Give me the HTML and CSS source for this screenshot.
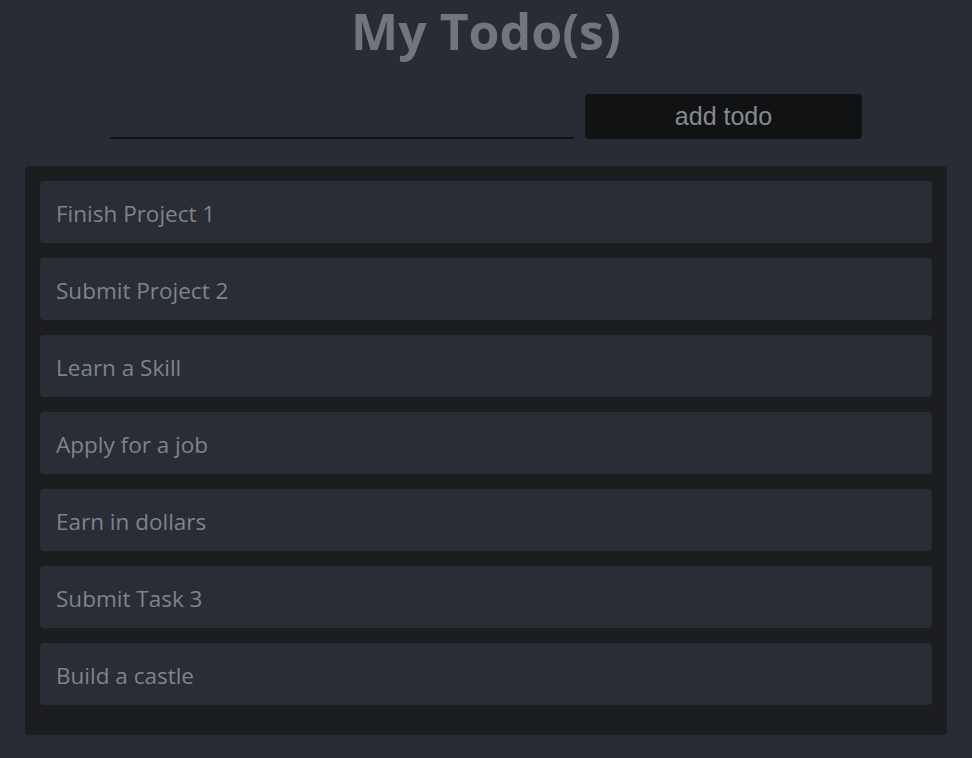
FILE: index.html
```html
<!DOCTYPE html>
<html>
<head>
<meta charset="utf-8">
<link rel="stylesheet" href="styles.css">
</head>
<body>
<div class="app">
  <h1 class="title">My Todo(s)</h1>
  <form class="add-form">
    <input class="todo-input" type="text">
    <button class="add-btn" type="button">add todo</button>
  </form>
  <div class="list">
    <div class="item">Finish Project 1</div>
    <div class="item">Submit Project 2</div>
    <div class="item">Learn a Skill</div>
    <div class="item">Apply for a job</div>
    <div class="item">Earn in dollars</div>
    <div class="item">Submit Task 3</div>
    <div class="item">Build a castle</div>
  </div>
</div>
</body>
</html>
```
FILE: styles.css
```css
html, body {
  margin: 0;
  padding: 0;
  background: #282c34;
}
body {
  font-family: "Open Sans", "Noto Sans", sans-serif;
  color: #7f838a;
}
.app {
  width: 922px;
  margin: 0 auto;
  padding-top: 2px;
}
.title {
  margin: 0;
  text-align: center;
  font-size: 50px;
  font-weight: 700;
  line-height: 58px;
  color: #72757c;
}
.add-form {
  display: flex;
  justify-content: center;
  align-items: flex-end;
  gap: 11px;
  margin-top: 34px;
}
.todo-input {
  width: 464px;
  height: 41px;
  box-sizing: border-box;
  background: transparent;
  border: none;
  border-bottom: 2px solid #111214;
  outline: none;
}
.add-btn {
  width: 277px;
  height: 45px;
  background: #111214;
  border: none;
  border-radius: 4px;
  color: #868990;
  font-family: "Liberation Sans", Arial, sans-serif;
  font-size: 25px;
}
.list {
  margin-top: 27px;
  background: #1b1d21;
  border-radius: 4px;
  padding: 15px 15px 30px;
  display: flex;
  flex-direction: column;
  gap: 15px;
}
.item {
  height: 62px;
  box-sizing: border-box;
  background: #292d35;
  border-radius: 4px;
  padding-left: 16px;
  padding-top: 2px;
  display: flex;
  align-items: center;
  font-size: 22.5px;
  color: #7f838a;
}
```
